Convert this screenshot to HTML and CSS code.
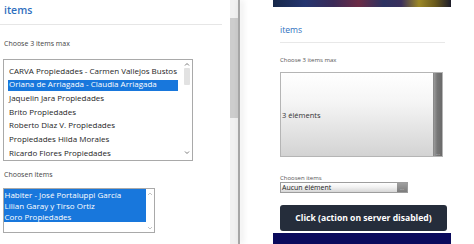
FILE: index.html
```html
<!DOCTYPE html>
<html lang="en">
<head>
<meta charset="utf-8">
<title>items</title>
<link rel="stylesheet" href="styles.css">
</head>
<body>
<div class="left">
  <div class="left-content">
    <h2 class="title">items</h2>
    <div class="rule"></div>
    <div class="label">Choose 3 items max</div>
    <div class="listbox lb1">
      <div class="options">
        <div class="opt">CARVA Propiedades - Carmen Vallejos Bustos</div>
        <div class="opt sel">Oriana de Arriagada - Claudia Arriagada</div>
        <div class="opt">Jaquelin Jara Propiedades</div>
        <div class="opt">Brito Propiedades</div>
        <div class="opt">Roberto Diaz V. Propiedades</div>
        <div class="opt">Propiedades Hilda Morales</div>
        <div class="opt">Ricardo Flores Propiedades</div>
      </div>
      <div class="vscroll">
        <svg class="arr" width="10" height="6" viewBox="0 0 10 6"><polyline points="3,4.5 5,2.5 7,4.5" fill="none" stroke="#7a7a7a" stroke-width="1"/></svg>
        <div class="track"><div class="thumb"></div></div>
        <svg class="arr" width="10" height="6" viewBox="0 0 10 6"><polyline points="3,1.5 5,3.5 7,1.5" fill="none" stroke="#7a7a7a" stroke-width="1"/></svg>
      </div>
    </div>
    <div class="label label2">Choosen items</div>
    <div class="listbox lb2">
      <div class="options">
        <div class="opt sel">Habiter - José Portaluppi García</div>
        <div class="opt sel">Lilian Garay y Tirso Ortiz</div>
        <div class="opt sel">Coro Propiedades</div>
      </div>
      <div class="vscroll">
        <svg class="arr" width="8" height="6" viewBox="0 0 8 6"><polyline points="2,4 4,2 6,4" fill="none" stroke="#c4c4c4" stroke-width="1"/></svg>
        <div class="track"></div>
        <svg class="arr" width="8" height="6" viewBox="0 0 8 6"><polyline points="2,2 4,4 6,2" fill="none" stroke="#c4c4c4" stroke-width="1"/></svg>
      </div>
    </div>
  </div>
  <div class="pagescroll"><div class="pthumb"></div></div>
</div>
<div class="divider"></div>
<div class="right">
  <div class="panel">
    <div class="banner"></div>
    <div class="panel-body">
      <h2 class="rtitle">items</h2>
      <div class="rrule"></div>
      <div class="rlabel">Choose 3 items max</div>
      <div class="multi">
        <span class="multi-text">3 éléments</span>
        <div class="multi-btn"><span class="grip">...</span></div>
      </div>
      <div class="rlabel rlabel2">Choosen items</div>
      <div class="drop">
        <span class="drop-text">Aucun élément</span>
        <div class="drop-btn"><span class="grip">...</span></div>
      </div>
      <button class="action" type="button">Click (action on server disabled)</button>
    </div>
    <div class="footer-bar"></div>
  </div>
</div>
</body>
</html>
```

FILE: styles.css
```css
* { box-sizing: border-box; }

html, body {
  margin: 0;
  padding: 0;
}

body {
  width: 474px;
  height: 244px;
  overflow: hidden;
  display: flex;
  background: #ffffff;
  font-family: "Open Sans", "DejaVu Sans", sans-serif;
  color: #222;
}

/* ---------- left frame ---------- */
.left {
  display: flex;
  width: 238px;
  height: 244px;
  flex: none;
}

.left-content {
  width: 230px;
  height: 244px;
  overflow: hidden;
}

.title {
  margin: 0;
  padding: 2px 0 0 4px;
  font-size: 10.5px;
  line-height: 16px;
  font-weight: 600;
  color: #2f6fbe;
}

.rule {
  margin-top: 6px;
  width: 222px;
  height: 1px;
  background: #e6e6e6;
}

.label {
  margin-top: 14px;
  padding-left: 4px;
  font-size: 7px;
  line-height: 10px;
  color: #444;
}

.label2 { margin-top: 9px; }

.listbox {
  display: flex;
  margin-left: 3px;
  border: 1px solid #a9a9a9;
  background: #fff;
  overflow: hidden;
}

.lb1 {
  margin-top: 10px;
  width: 190px;
  height: 102px;
}

.lb2 {
  margin-top: 8px;
  width: 152px;
  height: 45px;
}

.options {
  flex: 1;
  min-width: 0;
  overflow: hidden;
}

.lb1 .options { padding: 6.6px 4px 0 4px; }

.opt {
  font-size: 8px;
  white-space: nowrap;
  color: #1e1e1e;
}

.lb1 .opt {
  line-height: 8px;
  height: 11px;
  padding: 0 0 3px 1px;
  margin-bottom: 2.7px;
}

.lb2 .opt {
  line-height: 11px;
  height: 11px;
  padding-left: 0.5px;
}

.opt.sel {
  background: #1877dc;
  color: #fff;
}

.vscroll {
  display: flex;
  flex-direction: column;
  align-items: center;
  flex: none;
}

.lb1 .vscroll {
  width: 10px;
  padding: 1px 0 4px;
}

.lb2 .vscroll {
  width: 8px;
  padding: 2px 0 1px;
}

.arr { display: block; flex: none; }

.track {
  flex: 1;
  width: 100%;
  display: flex;
  justify-content: center;
}

.thumb {
  margin-top: 1px;
  width: 6px;
  height: 17px;
  background: #e2e2e2;
  border-radius: 1px;
}

.pagescroll {
  width: 8px;
  height: 244px;
  background: #f1f1f1;
  flex: none;
}

.pthumb {
  margin-top: 18px;
  width: 8px;
  height: 100px;
  background: #cdcdcd;
}

.divider {
  width: 2px;
  height: 244px;
  flex: none;
  background: #a6a6a6;
  box-shadow: 2px 0 6px rgba(0, 0, 0, 0.18);
  position: relative;
  z-index: 1;
}

/* ---------- right side ---------- */
.right {
  flex: 1;
  height: 244px;
  padding-left: 33px;
}

.panel {
  width: 178px;
  display: flex;
  flex-direction: column;
}

.banner {
  height: 7px;
  background: linear-gradient(90deg, #17284a 0%, #243570 18%, #3b2a57 34%, #6b2b45 48%, #2c3262 62%, #3a2f5c 72%, #9c8826 82%, #6a5a1c 91%, #1c1c2a 100%);
}

.panel-body {
  padding-left: 7px;
  display: flex;
  flex-direction: column;
  align-items: flex-start;
}

.rtitle {
  margin: 17px 0 0;
  font-size: 8.6px;
  line-height: 12px;
  font-weight: 500;
  color: #2f6fbe;
}

.rrule {
  margin-top: 6px;
  width: 165px;
  height: 1px;
  background: #e8e8e8;
}

.rlabel {
  margin-top: 13px;
  font-size: 6px;
  line-height: 8px;
  color: #555;
}

.rlabel2 { margin-top: 17px; }

.multi {
  margin-top: 8px;
  width: 163px;
  height: 85px;
  display: flex;
  align-items: center;
  border: 1px solid #b5b5b5;
  background: linear-gradient(180deg, #ffffff 0%, #f5f5f5 35%, #d3d3d3 100%);
}

.multi-text {
  flex: 1;
  padding-left: 1px;
  font-size: 7.5px;
  color: #333;
}

.multi-btn {
  align-self: stretch;
  width: 9px;
  display: flex;
  align-items: flex-end;
  justify-content: center;
  background: linear-gradient(90deg, #9a9a9a 0%, #777 40%, #6a6a6a 100%);
  border-left: 1px solid #8a8a8a;
}

.grip {
  font-size: 5px;
  line-height: 6px;
  color: #cfcfcf;
}

.drop {
  width: 128px;
  height: 11px;
  display: flex;
  align-items: center;
  border: 1px solid #9d9d9d;
  background: linear-gradient(180deg, #ffffff 0%, #f2f2f2 45%, #d6d6d6 100%);
}

.drop-text {
  flex: 1;
  padding-left: 1px;
  font-size: 7px;
  line-height: 9px;
  color: #222;
}

.drop-btn {
  align-self: stretch;
  width: 10px;
  display: flex;
  align-items: center;
  justify-content: center;
  background: linear-gradient(180deg, #a0a0a0, #7c7c7c);
}

.action {
  margin-top: 12px;
  width: 167px;
  height: 26px;
  padding: 0;
  border: none;
  border-radius: 3px;
  background: #252d3b;
  color: #fff;
  font-family: "Open Sans", "DejaVu Sans", sans-serif;
  font-weight: 700;
  font-size: 8.6px;
  cursor: pointer;
}

.footer-bar {
  margin-top: 2px;
  height: 12px;
  background: #0a0a5c;
}
```
